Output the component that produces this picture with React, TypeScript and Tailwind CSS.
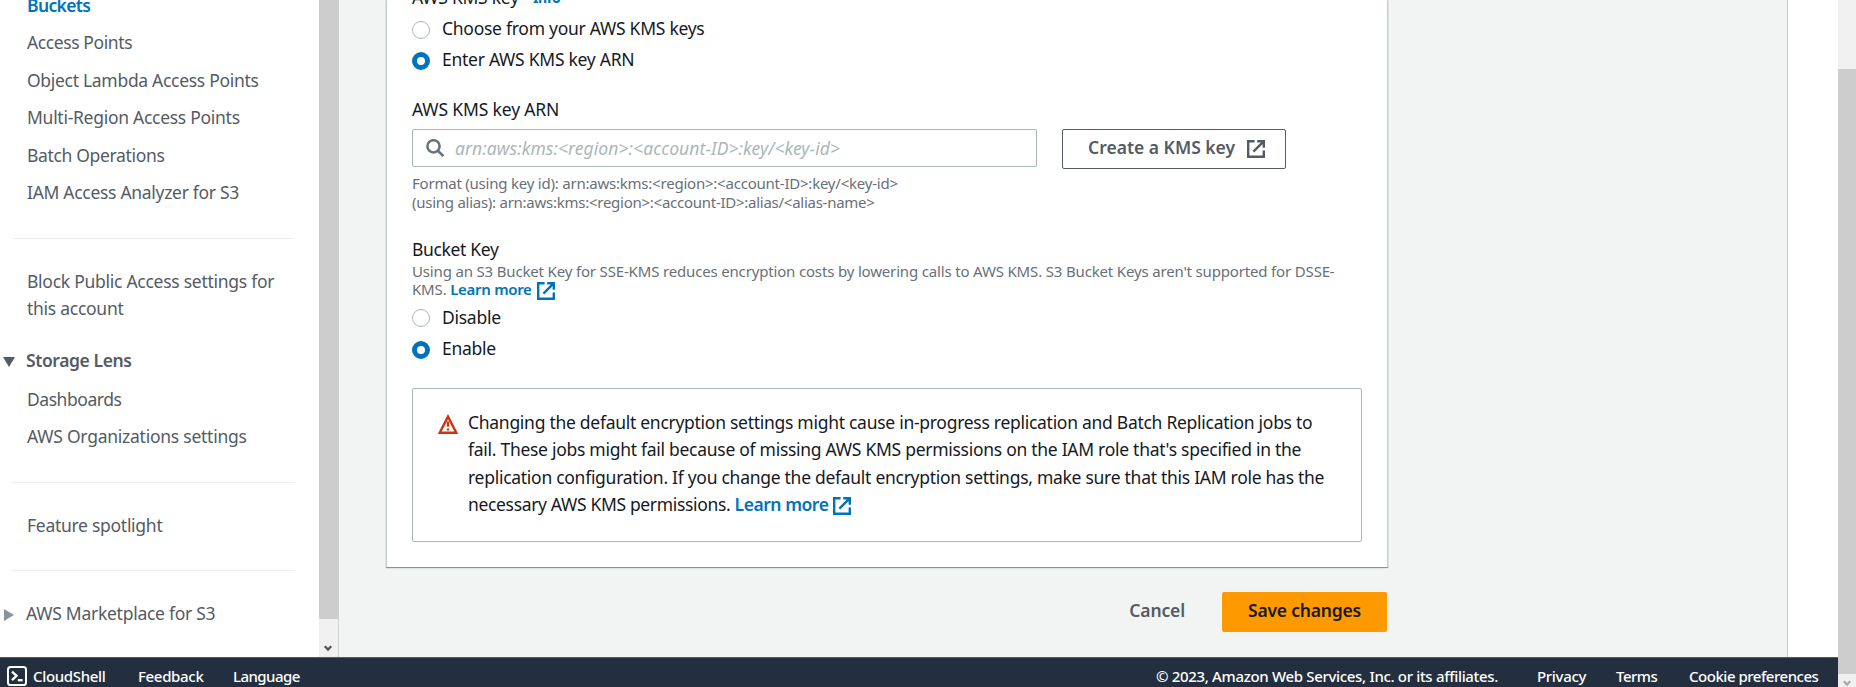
import type { ReactNode } from "react";

function ExternalIcon({ className = "" }: { className?: string }) {
  return (
    <svg viewBox="0 0 18 18" className={`size-[18px] shrink-0 ${className}`} fill="none" stroke="currentColor" strokeWidth="2.4">
      <path d="M7.6 1.2H1.2v15.6h15.6V10.4" />
      <path d="M10.2 1.2h6.6v6.6M16.4 1.6 6.4 11.6" />
    </svg>
  );
}

function SearchIcon() {
  return (
    <svg viewBox="0 0 18 18" className="size-[18px] shrink-0 text-[#687078]" fill="none" stroke="currentColor" strokeWidth="2.5">
      <circle cx="7.5" cy="7.3" r="6.1" />
      <path d="m11.8 11.6 5.4 5.4" />
    </svg>
  );
}

function WarningIcon() {
  return (
    <svg viewBox="0 0 20 20" className="size-5 shrink-0 text-[#d13212]" fill="none" stroke="currentColor" strokeWidth="2.4">
      <path d="M10 2.6 1.7 18.8h16.6z" />
      <path d="M10 7.4v5.4M10 14.4v2.2" />
    </svg>
  );
}

function CloudShellIcon() {
  return (
    <svg viewBox="0 0 20 20" className="size-5 shrink-0" fill="none" stroke="currentColor" strokeWidth="2">
      <rect x="1" y="1" width="18" height="18" rx="2.6" />
      <path d="m5 5.6 4.6 4.2L5 14.2" strokeWidth="2.3" />
      <path d="M10.8 14.2h4.8" strokeWidth="2.3" />
    </svg>
  );
}

function Chevron({ className = "" }: { className?: string }) {
  return (
    <svg viewBox="0 0 8 7" className={`h-[7px] w-2 ${className}`} fill="none" stroke="currentColor" strokeWidth="2.2">
      <path d="m.8 1.2 3.2 3.4 3.2-3.4" />
    </svg>
  );
}

function NavItem({ children, className = "" }: { children: ReactNode; className?: string }) {
  return <a className={`flex h-[37.5px] shrink-0 items-center pl-[27px] ${className}`}>{children}</a>;
}

function Divider({ className }: { className: string }) {
  return <hr className={`ml-3 w-[282px] shrink-0 border-t border-[#eaeded] ${className}`} />;
}

function Radio({ label, checked, className = "" }: { label: string; checked?: boolean; className?: string }) {
  return (
    <label className={`flex h-[31px] items-center gap-3 ${className}`}>
      <span
        className={
          checked
            ? "mt-[2px] size-[18px] rounded-full border-[5.5px] border-[#0073bb] bg-white"
            : "mt-[2px] size-[18px] rounded-full border border-[#aab7b8] bg-white"
        }
      />
      <span className="tracking-[-0.27px]">{label}</span>
    </label>
  );
}

function Sidebar() {
  return (
    <aside className="flex h-full w-[339px] shrink-0 overflow-hidden border-r border-[#d0d4d4] bg-white text-[#545b64]">
      <nav className="flex w-[319px] shrink-0 flex-col">
        <NavItem className="-mt-[13.5px] font-semibold tracking-[-0.65px] text-[#0073bb]">Buckets</NavItem>
        <NavItem className="-mt-[0.5px] tracking-[-0.4px]">Access Points</NavItem>
        <NavItem className="tracking-[-0.3px]">Object Lambda Access Points</NavItem>
        <NavItem className="tracking-[-0.28px]">Multi-Region Access Points</NavItem>
        <NavItem>Batch Operations</NavItem>
        <NavItem className="tracking-[-0.3px]">IAM Access Analyzer for S3</NavItem>
        <Divider className="mt-[27px]" />
        <a className="mt-[28.7px] pl-[27px] leading-[27px] tracking-[-0.27px]">
          Block Public Access settings for
          <br />
          this account
        </a>
        <div className="mt-[19.5px] flex h-[37.5px] shrink-0 items-center gap-[11px] pl-[3px] font-semibold tracking-[-0.4px]">
          <svg viewBox="0 0 12 10" className="mt-1 h-2.5 w-3" fill="currentColor">
            <path d="M0 0h12L6 10z" />
          </svg>
          Storage Lens
        </div>
        <NavItem className="mt-[1.8px] tracking-[-0.45px]">Dashboards</NavItem>
        <NavItem className="-mt-[0.5px] tracking-[-0.25px]">AWS Organizations settings</NavItem>
        <Divider className="mt-[27px]" />
        <NavItem className="mt-[23.5px] tracking-[-0.28px]">Feature spotlight</NavItem>
        <Divider className="mt-[26px]" />
        <div className="mt-[23.5px] flex h-[37.5px] shrink-0 items-center gap-[12px] pl-1 tracking-[-0.27px]">
          <svg viewBox="0 0 10 12" className="mt-1 h-3 w-2.5 text-[#879596]" fill="currentColor">
            <path d="M0 0v12l10-6z" />
          </svg>
          AWS Marketplace for S3
        </div>
      </nav>
      <div className="flex h-full w-[19px] flex-col bg-[#f0f0f0]">
        <div className="h-[619px] bg-[#cdcdcd]" />
        <Chevron className="mt-[26px] ml-[5px] text-[#505050]" />
      </div>
    </aside>
  );
}

function EncryptionCard() {
  return (
    <section className="flow-root h-[567px] w-[1002px] border-x border-[#c6cbcc] bg-white px-[25px] text-[#16191f] shadow-[0_1px_1px_0_#879596]">
      <div className="-mt-[18px] flex h-[30px] items-center">
        <span className="w-[121px] tracking-[-0.25px]">AWS KMS key</span>
        <a className="text-[14px] font-bold text-[#0073bb]">Info</a>
      </div>
      <Radio label="Choose from your AWS KMS keys" className="mt-[1px]" />
      <Radio label="Enter AWS KMS key ARN" checked />
      <div className="mt-[21px] h-[27px] leading-[27px] tracking-[-0.15px]">AWS KMS key ARN</div>
      <div className="mt-[6px] flex items-start gap-[25px]">
        <div className="flex h-[38px] w-[625px] items-center gap-[11px] rounded-[2px] border border-[#aab7b8] px-[13px] text-[#aab7b8] italic tracking-[0.07px]">
          <SearchIcon />
          <span>arn:aws:kms:&lt;region&gt;:&lt;account-ID&gt;:key/&lt;key-id&gt;</span>
        </div>
        <button className="flex h-10 w-[224px] items-center justify-between rounded-[2px] border border-[#545b64] pr-[20.5px] pb-[3px] pl-[25px] font-semibold tracking-[0px] text-[#545b64]">
          <span>Create a KMS key</span>
          <ExternalIcon className="mt-[3px]" />
        </button>
      </div>
      <div className="mt-[5px] text-[15px] leading-[19px] whitespace-nowrap text-[#687078]">
        <p className="tracking-[-0.22px]">Format (using key id): arn:aws:kms:&lt;region&gt;:&lt;account-ID&gt;:key/&lt;key-id&gt;</p>
        <p className="tracking-[-0.26px]">(using alias): arn:aws:kms:&lt;region&gt;:&lt;account-ID&gt;:alias/&lt;alias-name&gt;</p>
      </div>
      <div className="mt-[24px] h-[27px] leading-[27px]">Bucket Key</div>
      <div className="-mt-[1px] text-[15px] leading-[18px] tracking-[-0.165px] whitespace-nowrap text-[#687078]">
        <p>
          Using an S3 Bucket Key for SSE-KMS reduces encryption costs by lowering calls to AWS KMS. S3 Bucket Keys aren't
          supported for DSSE-
        </p>
        <p className="flex h-[18px]">
          KMS.&nbsp;
          <a className="flex gap-[5px] font-semibold tracking-[-0.3px] text-[#0073bb]">
            Learn more
            <ExternalIcon className="mt-[2px]" />
          </a>
        </p>
      </div>
      <Radio label="Disable" className="mt-[3.5px]" />
      <Radio label="Enable" checked className="mt-[0.5px]" />
      <div className="mt-[24px] flex h-[154px] w-[950px] gap-[10px] rounded-[2px] border border-[#aab7b8] pt-5 pl-[25px]">
        <span className="pt-[5px]">
          <WarningIcon />
        </span>
        <div className="leading-[27.3px] tracking-[-0.28px] whitespace-nowrap">
          <p>Changing the default encryption settings might cause in-progress replication and Batch Replication jobs to</p>
          <p>fail. These jobs might fail because of missing AWS KMS permissions on the IAM role that's specified in the</p>
          <p>replication configuration. If you change the default encryption settings, make sure that this IAM role has the</p>
          <p className="flex tracking-[-0.34px]">
            necessary AWS KMS permissions.&nbsp;
            <a className="flex gap-[5px] font-semibold tracking-[-0.45px] text-[#0073bb]">
              Learn more
              <ExternalIcon className="mt-[6px]" />
            </a>
          </p>
        </div>
      </div>
    </section>
  );
}

function Footer() {
  return (
    <footer className="flex h-[30px] shrink-0 items-center overflow-hidden border-t border-[#545b64] bg-[#232f3e] pt-[7px] pr-5 pl-[7px] text-[15px] leading-5 font-medium tracking-[-0.33px] whitespace-nowrap text-white">
      <div className="flex w-[131px] items-center gap-[6px]">
        <CloudShellIcon />
        <span>CloudShell</span>
      </div>
      <span className="w-[95px]">Feedback</span>
      <span className="tracking-[-0.55px]">Language</span>
      <span className="ml-auto w-[381px]">© 2023, Amazon Web Services, Inc. or its affiliates.</span>
      <span className="w-[79px]">Privacy</span>
      <span className="w-[73px] tracking-[-0.5px]">Terms</span>
      <span className="w-[129px] tracking-[-0.48px]">Cookie preferences</span>
    </footer>
  );
}

export default function App() {
  return (
    <div className="flex h-[687px] w-[1856px] overflow-hidden bg-white font-['Noto_Sans',sans-serif] text-[17.5px] tracking-[-0.34px]">
      <div className="flex w-[1838px] shrink-0 flex-col">
        <div className="flex h-[657px] shrink-0">
          <Sidebar />
          <main className="h-full w-[1449px] border-r border-[#c6cbcc] bg-[#f2f3f3] pl-[47px]">
            <EncryptionCard />
            <div className="mt-[25px] flex w-[1001px] items-center justify-end font-semibold">
              <button className="h-10 px-[37px] pb-1 tracking-[-0.15px] text-[#545b64]">Cancel</button>
              <button className="h-10 w-[165px] rounded-[2px] bg-[#ff9900] pb-1 tracking-[-0.2px] text-[#16191f]">Save changes</button>
            </div>
          </main>
        </div>
        <Footer />
      </div>
      <div className="flex w-[18px] shrink-0 flex-col bg-[#f0f0f0]">
        <div className="mt-[69px] h-[608px] bg-[#cdcdcd]" />
        <Chevron className="mt-[6px] ml-[5px] text-[#a8a8a8]" />
      </div>
    </div>
  );
}
